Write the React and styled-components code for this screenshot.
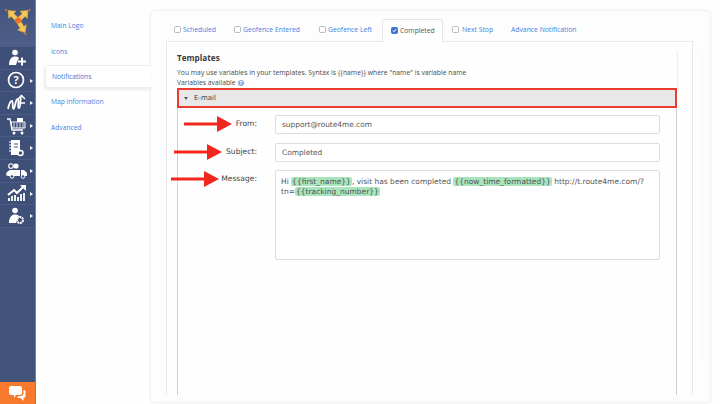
import React from 'react';
import styled, { createGlobalStyle } from 'styled-components';

const Global = createGlobalStyle`
  html, body { margin: 0; padding: 0; background: #fefefe; overflow: hidden; }
  * { box-sizing: border-box; }
  body { font-family: "Open Sans", "Liberation Sans", sans-serif; }
`;
const Page = styled.div`display: flex; width: 720px; height: 404px; overflow: hidden;`;
const Sidebar = styled.aside`
  width: 36px; flex: none; display: flex; flex-direction: column;
  background: #43547b; border-right: 1px solid #74829f;
`;
const LogoBox = styled.div`
  height: 47px; display: flex; align-items: flex-start; justify-content: center;
  background: linear-gradient(#43547c, #4d5f88);
`;
const Row = styled.div`
  height: 22.6px; flex: none; display: flex; align-items: center; position: relative;
  padding-left: 5px; background: #3f5078; border-bottom: 1px solid #4b5c83;
`;
const Caret = styled.span`
  position: absolute; left: 30px; top: 9px; width: 0; height: 0;
  border-left: 3px solid #f4f5f8; border-top: 2.5px solid transparent; border-bottom: 2.5px solid transparent;
`;
const Spacer = styled.div`flex: 1;`;
const Chat = styled.div`
  height: 22px; background: #f77a2c; display: flex; align-items: center; justify-content: center;
`;
const Nav = styled.nav`width: 115px; flex: none; padding-top: 13px; display: flex; flex-direction: column;`;
const NavItem = styled.div`
  height: 25.4px; display: flex; align-items: center; padding-left: ${p => p.$active ? 6 : 15}px;
  margin-left: ${p => p.$active ? 9 : 0}px; font-size: 6.7px; color: #4a7de0; position: relative; z-index: 1;
  ${p => p.$active && `
    height: 23px; margin: 1.2px 0 1.2px 9px; background: #fff; border: 1px solid #eee; border-right: 0;
    border-radius: 3px 0 0 3px; box-shadow: -1px 2px 3px rgba(0,0,0,.07); color: #3f72d8;
  `}
`;
const Panel = styled.main`
  width: 559px; height: 391px; margin-top: 11px; flex: none; display: flex; padding: 8px 0 7px 15px;
  background: #fdfdfd; border-radius: 4px; box-shadow: 0 0 3px rgba(0,0,0,.14);
`;
const TabsColumn = styled.div`width: 527px; flex: none; display: flex; flex-direction: column;`;
const Rail = styled.div`width: 10px; flex: none; margin: 33px 0 35px; border-right: 1px solid #f7f7f7;`;
const Tabs = styled.div`height: 22px; flex: none; display: flex; gap: 3px; position: relative; z-index: 1;`;
const Tab = styled.div`
  height: 23px; padding-bottom: 2px; display: flex; align-items: center; gap: 2px; padding-left: 8px;
  padding-right: 8px; width: ${p => p.$w}px; flex: none;
  font-size: 6.8px; color: ${p => p.$active ? '#555' : '#4a7de0'}; white-space: nowrap;
  ${p => p.$active && `background: #fff; border: 1px solid #e6e6e6; border-bottom: 0; border-radius: 3px 3px 0 0; margin-right: -2px;`}
`;
const Check = styled.span`
  width: 7px; height: 7px; flex: none; border-radius: 1.5px; margin-right: ${p => p.$gap || 0}px;
  border: 1px solid ${p => p.$on ? '#3f74d8' : '#bbb'}; background: ${p => p.$on ? '#3f74d8' : '#fff'};
  display: flex; align-items: center; justify-content: center;
`;
const TabBody = styled.div`
  flex: 1; display: flex; flex-direction: column; padding: 10px 15px 0 10px;
  border: 1px solid #e8e8e8; border-bottom: 0; background: #fefefe;
`;
const Heading = styled.h2`margin: 0; font-size: 8.2px; line-height: 14px; font-weight: 700; color: #3c3c3c;`;
const Note = styled.p`margin: 0; font-size: 6.8px; line-height: 10px; color: #4a4a4a; display: flex; align-items: center; gap: 2px;`;
const Intro = styled.div`
  display: flex; flex-direction: column; height: 37px;
  margin-top: -1px; border-right: 1px solid #eee; margin-right: -1px;
  ${Heading} { margin-bottom: 3px; }
`;
const Help = styled.span`
  width: 6px; height: 6px; border-radius: 50%; background: #8fa9dc; color: #fff; font-size: 5px; line-height: 6px;
  text-align: center; font-weight: 700;
`;
const AccordionHead = styled.div`
  height: 20px; flex: none; display: flex; align-items: center; gap: 6px; padding-left: 5px;
  background: #e8e8e8; border: 2px solid #ee3b30; font-family: "DejaVu Sans", sans-serif; font-size: 7px; color: #444;
`;
const Tri = styled.span`
  width: 0; height: 0; border-top: 3px solid #555; border-left: 2.5px solid transparent; border-right: 2.5px solid transparent;
`;
const AccordionBody = styled.div`
  flex: 1; display: flex; flex-direction: column; gap: 8.5px; padding: 7px 16px 0 0;
  border-left: 1px solid #cfcfcf; border-right: 1px solid #cfcfcf;
  font-family: "DejaVu Sans", sans-serif;
`;
const Field = styled.div`display: grid; grid-template-columns: 79px 1fr; column-gap: 18px; align-items: start;`;
const Label = styled.label`
  position: relative; text-align: right; font-size: 7.6px; line-height: 10px; padding-top: ${p => p.$top}px; color: #444;
`;
const Arrow = styled.svg`position: absolute; top: ${p => p.$top}px; right: ${p => p.$right}px; width: 48px; height: 16px;`;
const Input = styled.div`
  height: 19px; display: flex; align-items: center; padding-left: 6px; background: #fff;
  border: 1px solid #ddd; border-radius: 2px; font-size: 7.4px; color: #555;
`;
const TextArea = styled.div`
  height: 90px; padding: 6px 5px; background: #fff; border: 1px solid #ddd; border-radius: 2px;
  font-size: 7.5px; line-height: 10px; color: #555; white-space: nowrap;
`;
const Mark = styled.span`background: #a8e4bc; border-radius: 2px; padding: 0 1px;`;

const I = ({ children }) => (
  <svg width="24" height="20" viewBox="0 0 24 20" fill="none" stroke="#fff">{children}</svg>
);
const User = ({ gear }) => (
  <g>
    <circle cx="10" cy="4.500" r="2.800" fill="#fff" stroke="none" />
    <path d="M4 17c0-6 3-8.500 6-8.500 2 0 3 .5 4 1.500l-2 4-1 3z" fill="#fff" stroke="none" />
    {gear && <circle cx="15" cy="14" r="3" strokeWidth="2" strokeDasharray="2 .6" fill="#3f5078" />}
  </g>
);
const icons = [
  <I key="a"><User /><path d="M13 13.500h8M17 9.500v8" strokeWidth="2" /></I>,
  <I key="b"><circle cx="11" cy="10" r="7.500" strokeWidth="1.700" /><text x="11" y="13.800" textAnchor="middle" fontSize="11" fontWeight="700" fill="#fff" stroke="none" fontFamily="Open Sans">?</text></I>,
  <I key="c"><path d="M3 16c1-5 2-8 4-8 1.500 0 0 8 1.500 8s2-10 4-10-.5 9 1.500 9 1-10 2-12" strokeWidth="1.800" /><path d="M13 6l3.500-3.500L20 6M13 10h7" strokeWidth="1.500" /></I>,
  <I key="d"><path d="M2 3h3l2 11h11" strokeWidth="1.300" /><path d="M6 6h14v6H7z" strokeWidth="1" /><path d="M9 7v5M12 7v5M15 7v5M18 7v5" strokeWidth=".8" /><rect x="12" y="2" width="6" height="4" fill="#fff" stroke="none" /><circle cx="9" cy="17" r="1.500" fill="#fff" stroke="none" /><circle cx="17" cy="17" r="1.500" fill="#fff" stroke="none" /></I>,
  <I key="e"><rect x="6" y="2" width="9" height="15" fill="#fff" stroke="none" /><path d="M4 4h3M4 7h3M4 10h3M4 13h3" strokeWidth="1" /><path d="M9 6h4M9 9h4" stroke="#3f5078" /><circle cx="15.500" cy="15" r="2.500" stroke="#fff" fill="#3f5078" strokeWidth="1.500" /></I>,
  <I key="f"><circle cx="6" cy="5" r="2.300" strokeWidth="1.100" /><circle cx="11" cy="5" r="2.600" fill="#fff" stroke="none" /><path d="M1 14c0-3 3-5 5-5h9v6H3z" fill="#fff" stroke="none" /><path d="M16 9h3l3 3v3h-6z" fill="#fff" stroke="none" /><circle cx="18" cy="15.500" r="1.800" fill="#3f5078" strokeWidth="1" /><circle cx="7" cy="15.500" r="1.800" fill="#3f5078" strokeWidth="1" /></I>,
  <I key="g"><path d="M3 12l6-5 3 3 7-7" strokeWidth="2" /><path d="M15 2h6v6z" fill="#fff" stroke="none" /><path d="M4 18v-3M7 18v-5M10 18v-6M13 18v-4M16 18v-7M19 18v-8" strokeWidth="1.800" /></I>,
  <I key="h"><User gear /></I>,
];
const LogoArrow = ({ angle }) => (
  <path transform={`translate(15 16.500) rotate(${angle})`} d="M-2 0V-8H-5L0 -14L5 -8H2V0z" fill="#f6c552" stroke="#f3b544" strokeWidth=".5" />
);
const Logo = () => (
  <svg width="30" height="36" viewBox="0 0 30 36" style={{ marginTop: 4 }}>
    <LogoArrow angle={-45} /><LogoArrow angle={45} /><LogoArrow angle={150} />
    <circle cx="15" cy="16.500" r="3" fill="#f0702a" />
    <circle cx="3" cy="6" r="1.100" fill="#ec6f33" /><circle cx="26.500" cy="6" r="1.100" fill="#ec6f33" /><circle cx="22.500" cy="30" r="1.100" fill="#ec6f33" />
  </svg>
);
const RedArrow = ({ top, right }) => (
  <Arrow $top={top} $right={right} viewBox="0 0 48 16">
    <path d="M0 6.500h33V0l15 8-15 8V9.500H0z" fill="#f0271d" />
  </Arrow>
);

export default function App() {
  return (
    <Page>
      <Global />
      <Sidebar>
        <LogoBox><Logo /></LogoBox>
        {icons.map((ic, i) => <Row key={i}>{ic}{i > 0 && <Caret />}</Row>)}
        <Spacer />
        <Chat>
          <svg width="17" height="17" viewBox="0 0 17 17">
            <path d="M2 1h9a2 2 0 012 2v5a2 2 0 01-2 2H7l-2 3v-3H2a2 2 0 01-2-2V3a2 2 0 012-2z" fill="#fff" />
            <path d="M14.500 5c1 0 2 .5 2 2v4c0 1-1 2-2 2v3l-3-3H8l1.500-2H12c1.500 0 2.500-1 2.500-2.500z" fill="#fff" />
          </svg>
        </Chat>
      </Sidebar>
      <Nav>
        <NavItem>Main Logo</NavItem>
        <NavItem>Icons</NavItem>
        <NavItem $active>Notifications</NavItem>
        <NavItem>Map Information</NavItem>
        <NavItem>Advanced</NavItem>
      </Nav>
      <Panel>
        <TabsColumn>
          <Tabs>
            <Tab $w={57}><Check />Scheduled</Tab>
            <Tab $w={82}><Check />Geofence Entered</Tab>
            <Tab $w={68}><Check />Geofence Left</Tab>
            <Tab $active $w={61}>
              <Check $on><svg width="5" height="5" viewBox="0 0 5 5"><path d="M.8 2.600l1.200 1.200L4.200 1" stroke="#fff" fill="none" /></svg></Check>
              Completed
            </Tab>
            <Tab $w={56}><Check $gap={1} />Next Stop</Tab>
            <Tab>Advance Notification</Tab>
          </Tabs>
          <TabBody>
            <Intro>
              <Heading>Templates</Heading>
              <Note>You may use variables in your templates. Syntax is {'{{name}}'} where "name" is variable name</Note>
              <Note>Variables available <Help>?</Help></Note>
            </Intro>
            <AccordionHead><Tri />E-mail</AccordionHead>
            <AccordionBody>
              <Field>
                <Label $top={4}>From:<RedArrow top={1} right={25} /></Label>
                <Input>support@route4me.com</Input>
              </Field>
              <Field>
                <Label $top={4}>Subject:<RedArrow top={1} right={35} /></Label>
                <Input>Completed</Input>
              </Field>
              <Field>
                <Label $top={4}>Message:<RedArrow top={1} right={38} /></Label>
                <TextArea>
                  Hi <Mark>{'{{first_name}}'}</Mark>, visit has been completed <Mark>{'{{now_time_formatted}}'}</Mark> http://t.route4me.com/?<br />
                  tn=<Mark>{'{{tracking_number}}'}</Mark>
                </TextArea>
              </Field>
            </AccordionBody>
          </TabBody>
        </TabsColumn>
        <Rail />
      </Panel>
    </Page>
  );
}
